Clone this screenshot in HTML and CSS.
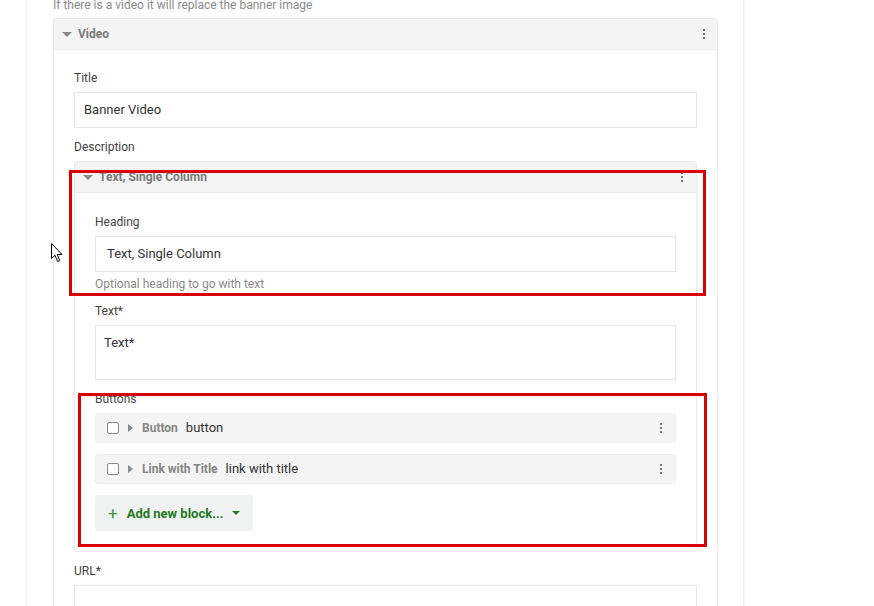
FILE: index.html
```html
<!DOCTYPE html>
<html lang="en">
<head>
    <meta charset="UTF-8">
    <title>Banner Video</title>
    <link rel="stylesheet" href="styles.css">
</head>
<body>

    <div class="panel">
        <p class="hint top-hint">If there is a video it will replace the banner image</p>

        <!-- Video block -->
        <div class="block video-block">
            <div class="block-head">
                <span class="tri-down"></span>
                <span class="block-title">Video</span>
                <span class="kebab"><i></i><i></i><i></i></span>
            </div>
            <div class="block-body">
                <div class="field">
                    <label>Title</label>
                    <div class="input">Banner Video</div>
                </div>

                <div class="field">
                    <label>Description</label>

                    <!-- Text, Single Column -->
                    <div class="block">
                        <div class="block-head">
                            <span class="tri-down"></span>
                            <span class="block-title">Text, Single Column</span>
                            <span class="kebab"><i></i><i></i><i></i></span>
                        </div>
                        <div class="block-body">
                            <div class="field">
                                <label>Heading</label>
                                <div class="input input-wide">Text, Single Column</div>
                                <p class="hint">Optional heading to go with text</p>
                            </div>

                            <div class="field">
                                <label>Text*</label>
                                <div class="input textarea">Text*</div>
                            </div>

                            <div class="field">
                                <label>Buttons</label>
                                <div class="rows">
                                    <div class="row">
                                        <span class="check"></span>
                                        <span class="tri-right"></span>
                                        <span class="row-type">Button</span>
                                        <span class="row-name">button</span>
                                        <span class="kebab"><i></i><i></i><i></i></span>
                                    </div>
                                    <div class="row">
                                        <span class="check"></span>
                                        <span class="tri-right"></span>
                                        <span class="row-type">Link with Title</span>
                                        <span class="row-name">link with title</span>
                                        <span class="kebab"><i></i><i></i><i></i></span>
                                    </div>
                                    <button class="add-btn">
                                        <span class="plus">+</span>
                                        <span>Add new block...</span>
                                        <span class="tri-green"></span>
                                    </button>
                                </div>
                            </div>
                        </div>
                    </div>
                </div>

                <div class="field">
                    <label>URL*</label>
                    <div class="input"></div>
                </div>
            </div>
        </div>
    </div>

    <!-- zaznaczenia na screenshocie -->
    <div class="mark mark-heading"></div>
    <div class="mark mark-buttons"></div>

    <svg class="cursor" width="13" height="20" viewBox="0 0 13 20">
        <path d="M0.5 0.5 L0.5 15.5 L4 12.3 L6.6 18.5 L8.8 17.6 L6.3 11.5 L11 11.5 Z" fill="#fff" stroke="#000" stroke-width="1"/>
    </svg>

</body>
</html>
```

FILE: styles.css
```css
body {
    margin: 0;
    font-family: Roboto, "Liberation Sans", sans-serif;
    background-color: #fff;
    color: #333;
    overflow: hidden;
    height: 606px;
    position: relative;
}

.panel {
    margin-left: 27px;
    width: 716px;
    min-height: 640px;
    padding-left: 26px;
    box-sizing: border-box;
    box-shadow: 0 0 3px rgba(0, 0, 0, 0.13);
}

.hint {
    margin: 4px 0 0;
    font-size: 12px;
    line-height: 16px;
    color: #8a8a8a;
}

.top-hint {
    margin: -2px 0 0;
    line-height: 14px;
}

.block {
    border: 1px solid #ebebeb;
    border-radius: 3px;
    background-color: #fff;
}

.video-block {
    margin-top: 6px;
    width: 665px;
    box-sizing: border-box;
}

.block-head {
    display: flex;
    align-items: center;
    height: 30px;
    padding: 0 13px 0 8px;
    background-color: #f4f4f4;
    border-bottom: 1px solid #ebebeb;
}

.video-block > .block-head {
    padding-right: 12px;
}

.block-title {
    font-size: 12px;
    font-weight: bold;
    color: #7a7a7a;
    margin-left: 6px;
    flex: 1;
}

.tri-down {
    width: 0;
    height: 0;
    border-left: 5px solid transparent;
    border-right: 5px solid transparent;
    border-top: 5px solid #8a8a8a;
}

.kebab {
    display: flex;
    flex-direction: column;
    gap: 2px;
    width: 2px;
}

.kebab i {
    display: block;
    width: 2px;
    height: 2px;
    background-color: #777;
}

.block-body {
    padding: 20px 20px 0;
}

.block .block .block-body {
    padding: 21px 20px 20px;
}

.field {
    margin-bottom: 11px;
}

.field:last-child {
    margin-bottom: 0;
}

label {
    display: block;
    font-size: 12px;
    line-height: 16px;
    color: #444;
    margin-bottom: 6px;
}

.input {
    height: 36px;
    box-sizing: border-box;
    border: 1px solid #e7e7e7;
    padding: 0 9px;
    font-size: 13px;
    line-height: 34px;
    color: #333;
}

.input-wide {
    padding-left: 11px;
}

.textarea {
    height: 55px;
    line-height: 34px;
    padding-left: 8px;
}

.rows {
    display: flex;
    flex-direction: column;
    gap: 11px;
}

.row {
    display: flex;
    align-items: center;
    height: 30px;
    box-sizing: border-box;
    padding: 0 13px 0 11px;
    background-color: #f4f4f4;
    border: 1px solid #efefef;
    border-radius: 3px;
}

.check {
    width: 10px;
    height: 10px;
    border: 1px solid #888;
    border-radius: 2px;
    background-color: #fff;
}

.tri-right {
    margin-left: 9px;
    width: 0;
    height: 0;
    border-top: 4px solid transparent;
    border-bottom: 4px solid transparent;
    border-left: 5px solid #8a8a8a;
}

.row-type {
    margin-left: 9px;
    font-size: 12px;
    font-weight: bold;
    color: #868686;
}

.row-name {
    margin-left: 8px;
    font-size: 13px;
    color: #333;
    flex: 1;
    position: relative;
    top: -1px;
}

.add-btn {
    display: flex;
    align-items: center;
    width: 158px;
    height: 36px;
    padding: 0 0 0 13px;
    border: none;
    border-radius: 3px;
    background-color: #f0f2f2;
    font-family: inherit;
    font-size: 13px;
    font-weight: bold;
    color: #1e7a1e;
    cursor: pointer;
}

.plus {
    font-size: 17px;
    font-weight: normal;
    color: #3a983a;
    margin-right: 9px;
    line-height: 1;
}

.tri-green {
    margin-left: 9px;
    width: 0;
    height: 0;
    border-left: 4px solid transparent;
    border-right: 4px solid transparent;
    border-top: 4px solid #1e7a1e;
}

.mark {
    position: absolute;
    border: 3px solid #d90000;
    box-sizing: border-box;
}

.mark-heading {
    left: 69px;
    top: 170px;
    width: 637px;
    height: 126px;
}

.mark-buttons {
    left: 78px;
    top: 393px;
    width: 629px;
    height: 154px;
}

.cursor {
    position: absolute;
    left: 51px;
    top: 243px;
}
```
